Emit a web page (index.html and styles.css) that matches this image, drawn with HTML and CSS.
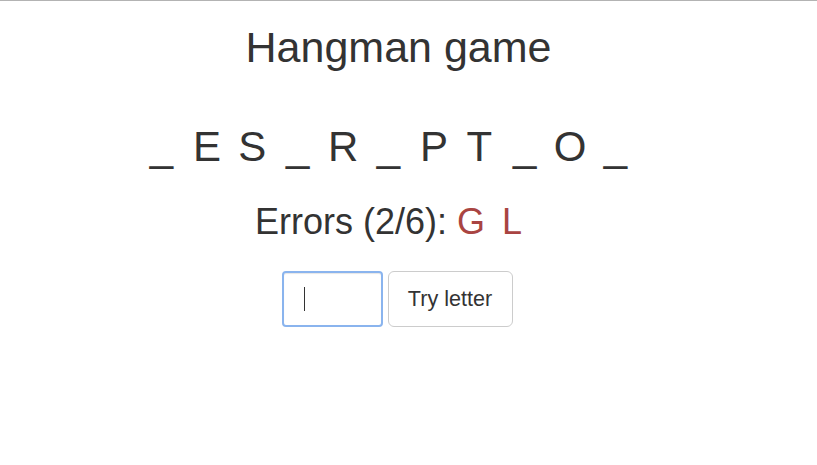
FILE: index.html
```html
<!DOCTYPE html>
<html>
<head>
<meta charset="utf-8">
<link rel="stylesheet" href="styles.css">
</head>
<body>
<div class="app">
  <h1 class="title">Hangman game</h1>
  <div class="word">
    <span class="ch">_</span><span class="ch">E</span><span class="ch">S</span><span class="ch">_</span><span class="ch">R</span><span class="ch">_</span><span class="ch">P</span><span class="ch">T</span><span class="ch">_</span><span class="ch">O</span><span class="ch">_</span>
  </div>
  <div class="errors">Errors (2/6): <span class="bad">G</span> <span class="bad bad-next">L</span></div>
  <form class="guess" onsubmit="return false">
    <span class="field"><input class="letter" type="text" maxlength="1" aria-label="Letter"></span>
    <button class="try" type="submit">Try letter</button>
  </form>
</div>
</body>
</html>
```
FILE: styles.css
```css
html, body {
  margin: 0;
  padding: 0;
  background: #fff;
}
body {
  border-top: 1px solid #b3b3b3;
  font-family: "Liberation Sans", Arial, sans-serif;
  color: #333;
}
.app {
  display: flex;
  flex-direction: column;
  align-items: center;
}
.title {
  margin: 23px 0 0;
  padding-right: 20px;
  font-size: 43px;
  font-weight: 400;
  line-height: 1.1;
}
.word {
  margin-top: 53px;
  display: flex;
  font-size: 42px;
  line-height: 1.1;
  padding-right: 40px;
}
.ch {
  width: 45.4px;
  text-align: center;
}
.errors {
  margin-top: 32px;
  font-size: 36px;
  line-height: 1.1;
  padding-right: 40px;
}
.bad {
  color: #a94442;
}
.bad-next {
  margin-left: 7px;
}
.guess {
  margin-top: 29px;
  display: flex;
  gap: 5px;
  margin-right: 23px;
}
.field {
  position: relative;
  display: block;
}
.field::after {
  content: "";
  position: absolute;
  left: 22px;
  top: 16px;
  width: 1px;
  height: 24px;
  background: #333;
}
.letter {
  box-sizing: border-box;
  width: 101px;
  height: 56px;
  border: 2px solid #8ab4ee;
  border-radius: 4px;
  padding: 0 20px;
  font-family: inherit;
  font-size: 22px;
  color: #333;
  outline: none;
  box-shadow: inset 0 1px 1px rgba(0,0,0,.1);
}
.try {
  box-sizing: border-box;
  width: 125px;
  height: 56px;
  border: 1px solid #ccc;
  border-radius: 6px;
  background: #fff;
  font-family: inherit;
  font-size: 21.6px;
  color: #333;
  padding: 0;
}
```
